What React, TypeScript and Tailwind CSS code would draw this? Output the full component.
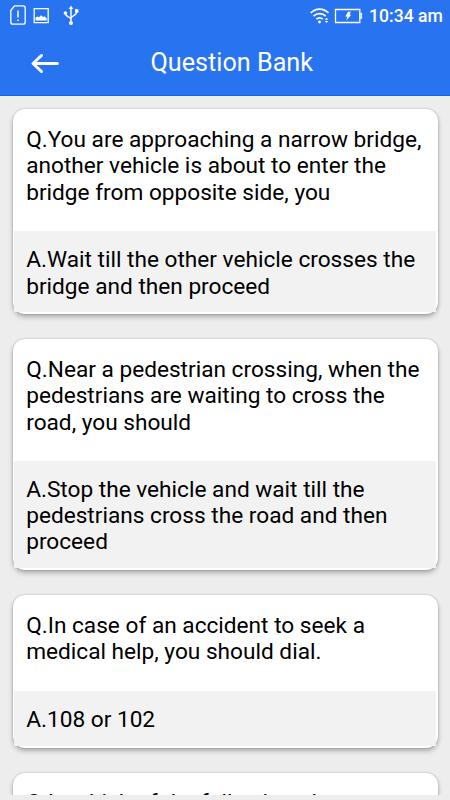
const cards = [
  { q: ['Q.You are approaching a narrow bridge,', 'another vehicle is about to enter the', 'bridge from opposite side, you'], a: ['A.Wait till the other vehicle crosses the', 'bridge and then proceed'], box: 'h-[205px]', ans: 'h-[81px]', top: 'pt-[18px]' },
  { q: ['Q.Near a pedestrian crossing, when the', 'pedestrians are waiting to cross the', 'road, you should'], a: ['A.Stop the vehicle and wait till the', 'pedestrians cross the road and then', 'proceed'], box: 'h-[231px]', ans: 'h-[107.5px]', top: 'pt-[18px]' },
  { q: ['Q.In case of an accident to seek a', 'medical help, you should dial.'], a: ['A.108 or 102'], box: 'h-[152.5px]', ans: 'h-[55px]', top: 'pt-[18px]' },
  { q: ['Q.In which of the following places'], a: [], box: 'h-[152.5px]', ans: 'h-[55px]', top: 'pt-[17.4px]' },
];

function StatusBar() {
  return (
    <div className="flex h-8 items-center justify-between pl-[10px] pr-[8px] text-white">
      <svg width="70" height="32" viewBox="10 0 70 32" fill="none" stroke="white" strokeWidth="1.3">
        <path d="M14.5 5.8H23a2.2 2.2 0 0 1 2.2 2.2v14a2.2 2.2 0 0 1-2.2 2.2H13a2.2 2.2 0 0 1-2.2-2.2V10.5z" />
        <path d="M18 10.5v7M18 19.5v1.6" strokeWidth="1.5" />
        <path d="M34.2 8.6h14v14h-14z" />
        <path d="M35.5 20.6v-3l2-1 1.5.7 2-2 2 1.6 1.5-.6 2.2 2v2.3z" fill="white" stroke="none" />
        <path d="M71 7v16M71 19.5c0-3-5.6-2.5-5.6-6M71 18.5c0-3 5.7-2.5 5.7-7" strokeWidth="1.4" />
        <path d="M71 5.5l2.3 3.5h-4.6z" fill="white" stroke="none" />
        <circle cx="65.4" cy="13" r="1.8" fill="white" stroke="none" />
        <path d="M75 9.2h3.4v3.4H75z" fill="white" stroke="none" />
        <circle cx="71" cy="23" r="2" fill="white" stroke="none" />
      </svg>
      <div className="flex items-center">
        <svg width="60" height="32" viewBox="308 0 60 32" fill="none" stroke="white">
          <path d="M310.7 13c5-5.3 12.8-5.3 17.8 0M313.5 16.2c3.4-3.5 8.8-3.5 12.2 0M316.4 19.2c1.8-1.8 4.6-1.8 6.4 0" strokeWidth="1.7" />
          <circle cx="319.5" cy="22" r="1.4" fill="white" stroke="none" />
          <path d="M326.5 17.8l1.8 2h-3.6zM326.5 23l1.8-2h-3.6z" fill="white" stroke="none" />
          <path d="M335.5 9.5h24.3v13h-24.3z" strokeWidth="1.3" />
          <path d="M360.4 13h1.3v5.5h-1.3" fill="white" strokeWidth=".7" />
          <path d="M348 11.8h2.8l-1.3 3h1.7l-4.9 5.7 1-4h-2z" fill="white" stroke="none" />
        </svg>
        <span className="ml-[1px] w-[73px] whitespace-nowrap text-[17.6px] font-medium leading-8">10:34 am</span>
      </div>
    </div>
  );
}

export default function App() {
  return (
    <div className="flex h-[800px] w-[450px] flex-col overflow-hidden bg-[#ededed] font-['Roboto',sans-serif]">
      <header className="h-24 shrink-0 border-b border-[#0869ef] bg-[#2874f0]">
        <StatusBar />
        <div className="flex h-[62px] items-center pl-[30px]">
          <svg className="-mt-px shrink-0" width="30" height="24" viewBox="30 51 30 24" fill="none" stroke="white" strokeWidth="3" strokeLinecap="round" strokeLinejoin="round">
            <path d="M57.3 63.5H33.5M41.5 55.5l-8.5 8 8.5 8" />
          </svg>
          <h1 className="ml-[90.5px] whitespace-nowrap text-[25.2px] leading-7 text-white">Question Bank</h1>
        </div>
      </header>
      <main className="flex h-[699px] shrink-0 flex-col gap-[25px] overflow-hidden px-[12.5px] pt-[13px] text-[22.65px] leading-[26.3px] text-black">
        {cards.map((c) => (
          <section key={c.q[0]} className={`${c.box} flex shrink-0 flex-col justify-between rounded-[12px] bg-white px-[1.5px] pb-[2px] shadow-[0_3px_5px_rgba(0,0,0,.28),0_0_2px_rgba(0,0,0,.24)]`}>
            <div className={`${c.top} pl-[12.2px]`}>
              {c.q.map((line) => <p key={line} className="whitespace-nowrap">{line}</p>)}
            </div>
            <div className={`${c.ans} bg-[#f2f2f2] pl-[12.2px] pt-[16.4px]`}>
              {c.a.map((line) => <p key={line} className="whitespace-nowrap">{line}</p>)}
            </div>
          </section>
        ))}
      </main>
    </div>
  );
}
